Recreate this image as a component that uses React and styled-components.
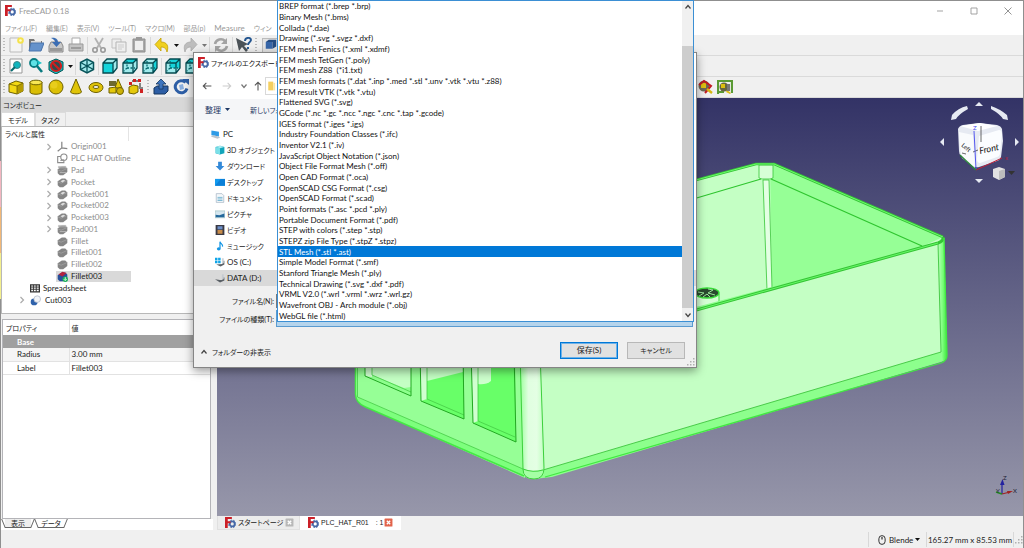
import React from "react";
import styled, { createGlobalStyle, css } from "styled-components";

const UI = `Lato, "Noto Sans CJK JP", sans-serif`;

const Global = createGlobalStyle`
  * { box-sizing: border-box; }
  body {
    margin: 0;
    overflow: hidden;
    font: 8px/12px ${UI};
    font-feature-settings: "palt";
    color: #222;
    background: #f0f0f0;
  }
  button, input, select {
    font: inherit;
    font-feature-settings: inherit;
    color: inherit;
    margin: 0;
    padding: 0;
    border: 0;
    background: none;
  }
  svg { display: block; flex: none; }
  ul { list-style: none; margin: 0; padding: 0; }
`;

/* ---------- main window ---------- */
const Window = styled.div`
  position: relative;
  display: flex;
  flex-direction: column;
  height: 100vh;
  border: 1px solid #8f8f8f;
  border-bottom: 0;
  background: #f0f0f0;
  &::before {
    content: "";
    position: absolute;
    left: -1px;
    top: 160px;
    width: 1px;
    height: 138px;
    background: linear-gradient(#f3b6c0 0 33%, #f2b877 33% 67%, #f4f08e 67%);
  }
`;
const TitleBar = styled.header`
  display: flex;
  align-items: center;
  height: 19px;
  padding-left: 4px;
  gap: 3px;
  background: #fff;
  color: #999;
`;
const Caption = styled.h1`
  flex: 1;
  margin: 0;
  font-size: 8px;
  font-weight: 400;
`;
const WinButton = styled.button`
  display: grid;
  place-items: center;
  width: 31px;
  height: 18px;
`;
const MenuBar = styled.nav`
  display: flex;
  align-items: center;
  height: 15px;
  padding-left: 4px;
  gap: 9px;
  background: #fff;
  color: #999;
  white-space: nowrap;
`;
const MenuItem = styled.button`
  && { font-size: ${(p) => (p.$latin ? "8px" : "7px")}; }
`;
const ToolRow = styled.div`
  display: flex;
  align-items: center;
  height: 21px;
  padding-left: 1px;
  border-bottom: 1px solid #dadada;
`;
const Grip = styled.span`
  width: 4px;
  height: 16px;
  margin-right: ${(p) => (p.$wide ? "1px" : "0")};
  background: radial-gradient(circle, #bbb 1px, transparent 1px) 0 0 / 4px 3px;
`;
const ToolButton = styled.button`
  display: grid;
  place-items: center;
  width: ${(p) => (p.$drop ? "8px" : "20px")};
  height: 20px;
`;
const Divider = styled.span`
  width: 1px;
  height: 17px;
  margin: 0 1px;
  background: #d8d8d8;
`;
const HiddenTools = styled.span`
  flex: 0 0 504px;
`;
const Workbench = styled.button`
  display: flex;
  align-items: center;
  width: 120px;
  height: 15px;
  margin-left: 3px;
  padding-left: 2px;
  border: 1px solid #bbb;
  background: #e3e3e3;
`;

const Main = styled.main`
  display: flex;
  flex: 1;
  min-height: 0;
`;
const Sidebar = styled.aside`
  display: flex;
  flex-direction: column;
  width: 216px;
  padding-right: 4px;
`;
const DockTitle = styled.h2`
  margin: 0;
  padding: 0 2px;
  height: 14px;
  font-size: 7px;
  line-height: 14px;
  font-weight: 400;
  background: #d8d8d8;
`;
const DockTabs = styled.div`
  display: flex;
  height: 14px;
  font-size: 7px;
`;
const DockTab = styled.button`
  width: ${(p) => (p.$on ? "34px" : "31px")};
  height: 14px;
  border: 1px solid #dcdcdc;
  border-bottom: 0;
  background: ${(p) => (p.$on ? "#fff" : "#f0f0f0")};
`;
const TreeBox = styled.section`
  flex: 0 0 188px;
  border: 1px solid #b8b8b8;
  background: #fff;
`;
const TreeHead = styled.div`
  width: 127px;
  height: 14px;
  padding-left: 3px;
  font-size: 7px;
  line-height: 14px;
  border-right: 1px solid #e4e4e4;
`;
const Tree = styled.ul`
  display: grid;
  grid-auto-rows: 1fr;
  height: 165px;
`;
const Node = styled.li`
  display: flex;
  align-items: center;
  padding-left: ${(p) => (p.$root ? "15px" : "42px")};
  gap: 2px;
  line-height: 11px;
  color: ${(p) => (p.$dim ? "#8c8c8c" : "#222")};
`;
const Expand = styled.span`
  display: grid;
  place-items: center;
  width: 10px;
`;
const NodeLabel = styled.span`
  display: flex;
  align-items: center;
  align-self: stretch;
  gap: ${(p) => (p.$root ? "4px" : "3px")};
  width: 75px;
  padding-left: 1px;
  white-space: nowrap;
  background: ${(p) => (p.$on ? "#d9d9d9" : "transparent")};
`;
const PropBox = styled.section`
  flex: 1;
  margin: 5px 2px 0 1px;
  border: 1px solid #b4b4b8;
  background: #fff;
`;
const PropTable = styled.table`
  width: 100%;
  border-collapse: collapse;
  table-layout: fixed;
  th, td {
    height: 13px;
    padding: 0 2px;
    text-align: left;
    font-weight: 400;
    line-height: 12px;
    border-bottom: 1px solid #e2e2e2;
  }
  th:first-child { width: 66px; padding-left: 14px; border-right: 1px solid #e2e2e2; }
  thead th { height: 15px; font-size: 7px; border-bottom: 0; }
  thead th:first-child { padding-left: 3px; }
  tbody tr:nth-child(2) { background: #f5f5f5; }
`;
const GroupRow = styled.tr`
  && { background: #a0a0a0; color: #fff; }
  && th { font-weight: 700; border: 0; }
`;
const PropTabs = styled.div`
  display: flex;
  height: 11px;
  margin-bottom: 1px;
  padding-left: 4px;
  gap: 7px;
  font-size: 7px;
  background: #fff;
`;
const SlantTab = styled.button`
  position: relative;
  width: 26px;
  height: 9px;
  line-height: 9px;
  border-bottom: 1px solid #666;
  background: ${(p) => (p.$on ? "#fff" : "#eee")};
  &::before, &::after {
    content: "";
    position: absolute;
    top: 0;
    height: 9px;
    width: 1px;
    background: #666;
  }
  &::before { left: -2px; transform: skewX(22deg); }
  &::after { right: -2px; transform: skewX(-22deg); }
`;

const ViewArea = styled.section`
  display: flex;
  flex-direction: column;
  flex: 1;
  min-width: 0;
`;
const Scene = styled.svg`
  flex: 1 1 0;
  width: 100%;
  min-height: 0;
`;
const DocTabs = styled.div`
  display: flex;
  height: 14px;
  margin-bottom: 1px;
  font-size: 7px;
`;
const DocTab = styled.button`
  display: flex;
  align-items: center;
  gap: 2px;
  width: ${(p) => (p.$on ? "101px" : "83px")};
  height: 14px;
  padding-left: 7px;
  border: 1px solid ${(p) => (p.$on ? "#fff" : "#e0e0e0")};
  border-top: 0;
  background: ${(p) => (p.$on ? "#fff" : "#ececec")};
  && { font-family: "Liberation Sans", "Noto Sans CJK JP", sans-serif; }
  white-space: pre;
`;
const DocName = styled.span`
  width: ${(p) => (p.$on ? "61px" : "45px")};
  display: flex;
  gap: 7px;
`;
const StatusBar = styled.footer`
  display: flex;
  align-items: center;
  justify-content: flex-end;
  height: 17px;
  gap: 1px;
`;
const StatusLine = styled.span`
  width: 1px;
  height: 15px;
  background: #d8d8d8;
`;
const NavStyle = styled.button`
  display: flex;
  align-items: center;
  gap: 2px;
  width: 55px;
  padding-left: 7px;
`;

/* ---------- export dialog ---------- */
const Dialog = styled.section`
  position: absolute;
  left: 192px;
  top: 51px;
  display: flex;
  flex-direction: column;
  width: 504px;
  border: 1px solid #858585;
  background: #f0f0f0;
  box-shadow: 0 3px 9px rgba(0, 0, 0, 0.4);
`;
const DialogTitle = styled.h2`
  display: flex;
  align-items: center;
  gap: 2px;
  height: 19px;
  margin: 0;
  padding-left: 4px;
  font-size: 7px;
  font-weight: 400;
  background: #fff;
  color: #111;
`;
const NavRow = styled.div`
  display: flex;
  align-items: center;
  height: 27px;
  padding-left: 3px;
  background: #fff;
`;
const NavButton = styled.button`
  display: grid;
  place-items: center;
  width: ${(p) => (p.$slim ? "14px" : "20px")};
  height: 18px;
`;
const Address = styled.div`
  display: flex;
  align-items: center;
  width: 220px;
  height: 18px;
  padding-left: 1px;
  border: 1px solid #d9d9d9;
`;
const CommandBar = styled.div`
  display: flex;
  align-items: center;
  gap: 20px;
  height: 21px;
  padding-left: 11px;
  background: #f5f6f8;
  color: #1f3864;
  button { display: flex; align-items: center; gap: 4px; }
`;
const CompactButton = styled.button`
  && { font-size: 7px; }
`;
const Places = styled.ul`
  padding-top: 6px;
  background: #fff;
`;
const Place = styled.li`
  display: flex;
  align-items: center;
  gap: 2px;
  height: 16px;
  padding-left: ${(p) => (p.$top ? "16px" : "21px")};
  font-size: ${(p) => (p.$latin ? "8px" : "7px")};
  background: ${(p) => (p.$on ? "#d9d9d9" : "transparent")};
`;
const Fields = styled.div`
  display: grid;
  grid-template-columns: 80px 417px;
  column-gap: 2px;
  row-gap: 2px;
  padding-top: 8px;
  align-items: center;
  label { text-align: right; white-space: nowrap; font-size: 7px; }
  input, select { height: 14px; border: 1px solid #7a7a7a; background: #fff; }
  select { border-color: #5a9bd0; background: #b5d4ec; appearance: none; height: 17px; color: transparent; }
`;
const Actions = styled.div`
  display: flex;
  align-items: center;
  gap: 9px;
  height: 40px;
  padding: 6px 11px 0 6px;
`;
const FolderToggle = styled.button`
  display: flex;
  align-items: center;
  gap: 4px;
  margin-right: auto;
  padding-top: 4px;
  && { font-size: 7px; }
`;
const PushButton = styled.button`
  width: 58px;
  height: 17px;
  background: #e1e1e1;
  border: 1px solid #b8b8b8;
  && { font-size: ${(p) => (p.$primary ? "8px" : "7px")}; }
  ${(p) =>
    p.$primary &&
    css`
      border-color: #0078d7;
      box-shadow: inset 0 0 0 1px #6fb2e8;
    `}
`;
const Corner = styled.span`
  position: absolute;
  right: 1px;
  bottom: 1px;
`;

/* ---------- file type list ---------- */
const Popup = styled.div`
  position: absolute;
  left: 276px;
  top: -1px;
  display: flex;
  width: 417px;
  height: 322px;
  border: 1px solid #3b8fd4;
  background: #fff;
`;
const Types = styled.ul`
  display: grid;
  grid-auto-rows: 1fr;
  flex: 1;
`;
const Type = styled.li`
  display: flex;
  align-items: center;
  padding-left: 1px;
  white-space: pre;
  line-height: 10px;
  background: ${(p) => (p.$on ? "#0078d7" : "#fff")};
  color: ${(p) => (p.$on ? "#fff" : "#111")};
`;
const Scroll = styled.div`
  display: flex;
  flex-direction: column;
  align-items: center;
  justify-content: space-between;
  width: 11px;
  padding: 2px 0;
  background: #f0f0f0;
`;
const Thumb = styled.span`
  flex: 1;
  width: 11px;
  margin: 35px 0 3px;
  background: #cdcdcd;
`;

/* ---------- icons ---------- */
const S = ({ s = 16, h, children, ...r }) => (
  <svg width={s} height={h || s} viewBox={`0 0 16 16`} fill="none" aria-hidden="true" {...r}>
    {children}
  </svg>
);
const Logo = ({ s = 11 }) => (
  <S s={s}>
    <circle cx="10.500" cy="10" r="3.600" fill="none" stroke="#4568a8" strokeWidth="2.600" />
    <circle cx="10.500" cy="10" r="5.400" fill="none" stroke="#4568a8" strokeWidth="1.400" strokeDasharray="2.400 2" />
    <path d="M0 0h10v3H4v3h4v3H4v7H0z" fill="#cb1f27" />
  </S>
);
const Chev = ({ d = "down", c = "#444", s = 8 }) => (
  <S s={s}>
    <path
      d={{ down: "M3 5l5 6 5-6", up: "M3 11l5-6 5 6", right: "M5 2l6 6-6 6" }[d]}
      stroke={c}
      strokeWidth="2.400"
    />
  </S>
);
const Caret = ({ c = "#111" }) => (
  <svg width="5" height="3" viewBox="0 0 5 3" aria-hidden="true">
    <path d="M0 0h5L2.500 3z" fill={c} />
  </svg>
);
const Arrow = ({ r = 0, c = "#555" }) => (
  <S s={10}>
    <path d="M15 8H2M7 3L2 8l5 5" stroke={c} strokeWidth="1.700" transform={`rotate(${r} 8 8)`} />
  </S>
);
const ViewCube = ({ face }) => (
  <S>
    <path d="M1 5l4-4h10v9l-4 5H1z" fill="#9fe9eb" />
    {face === "front" && <path d="M1 5h10v10H1z" fill="#16d4da" />}
    {face === "top" && <path d="M1 5l4-4h10l-4 4z" fill="#16d4da" />}
    {face === "right" && <path d="M11 5l4-4v9l-4 5z" fill="#16d4da" />}
    {face === "rear" && <path d="M5 1h10v9H5z" fill="#16d4da" />}
    <path d="M1 5l4-4h10v9l-4 5H1zM1 5h10v10M11 5l4-4" stroke="#04494f" strokeWidth="1.300" />
    {face !== "front" && <path d="M5 3v7h8M5 10l-3 3" stroke="#04696f" strokeWidth="1.300" strokeDasharray="2 1.500" />}
  </S>
);
const T = {
  new: <S><path d="M2 1h9l3 3v11H2z" fill="#f4f4f4" stroke="#bbb" /><circle cx="12.500" cy="3.500" r="3.300" fill="#f4e24d" /><circle cx="12.500" cy="3.500" r="1.300" fill="#fffbd0" /></S>,
  open: <S><path d="M1 2h5l1 2h7v9H1z" fill="#777" /><path d="M3 4h10v5H3z" fill="#ddd" /><path d="M1 14l2-8h13l-3 8z" fill="#6592cb" stroke="#4a74ac" /></S>,
  save: <S><path d="M1 9l2-4h10l2 4v6H1z" fill="#c9c9c9" stroke="#888" /><path d="M2 11h12v3H2z" fill="#999" /><path d="M3 1c5-1 7 2 7 4h3L8.500 10 4 5h3c0-2-2-3-4-4z" fill="#3b6db3" /></S>,
  print: <S><path d="M4 1h8v7H4z" fill="#fff" stroke="#aaa" /><path d="M1 7h14v7H1z" fill="#c4c4c4" stroke="#999" /><path d="M3 11h10" stroke="#777" /></S>,
  cut: <S><path d="M4 1l6 10M12 1L6 11" stroke="#b2b2b2" strokeWidth="1.800" /><circle cx="4" cy="13" r="2.200" stroke="#999" strokeWidth="1.600" /><circle cx="12" cy="13" r="2.200" stroke="#999" strokeWidth="1.600" /></S>,
  copy: <S><path d="M1 2h9v9H1z" fill="#eee" stroke="#c2c2c2" /><path d="M5 5h10v10H5z" fill="#eee" stroke="#b5b5b5" /><path d="M7 8h6M7 10h6M7 12h4" stroke="#ccc" /></S>,
  paste: <S><path d="M2 2h12v13H2z" fill="#aaa" stroke="#8c8c8c" /><path d="M4 4h8v9H4z" fill="#efefef" /><path d="M5 0h6v3H5z" fill="#999" /></S>,
  undo: <S><path d="M7 1v4c6 0 8 4 6 10-1-4-3-5-6-5v4L1 7.500z" fill="#f0d020" stroke="#c2a000" strokeWidth=".8" /></S>,
  redo: <S><path d="M9 1v4c-6 0-8 4-6 10 1-4 3-5 6-5v4l6-6.500z" fill="#bdbdbd" stroke="#aaa" strokeWidth=".8" /></S>,
  refresh: <S><path d="M2 7c1-5 7-6 10-3M14 9c-1 5-7 6-10 3" stroke="#a3a3a3" strokeWidth="2.600" /><path d="M14 1v6H8zM2 15V9h6z" fill="#a3a3a3" /></S>,
  what: <S><path d="M0 1l3 13 3-4 4 5 2-2-4-4 4-2z" fill="#4c5358" /><path d="M9 4c0-4 6-4 6-1 0 2-3 2-3 5M12 10v2" stroke="#24558f" strokeWidth="1.900" /></S>,
  part: <S s={12}><path d="M1 4h9v9H1z" fill="#3665a8" /><path d="M1 4l4-3h10v9l-5 3V4z" fill="#244a80" /></S>,
  fitAll: <S><path d="M2 1h12v14H2z" fill="#fff" stroke="#999" /><circle cx="9" cy="7" r="3.500" fill="#10b5bd" stroke="#3d8488" /><path d="M7 9l-4 4" stroke="#066a70" strokeWidth="2.200" /></S>,
  fitSel: <S><circle cx="6" cy="5" r="4" fill="#5ee2e6" stroke="#087a80" strokeWidth="1.800" /><path d="M9 8l5 6" stroke="#087a80" strokeWidth="2.600" /><path d="M9 2l5 3-4 2" fill="#18c2c8" /></S>,
  draw: <S><path d="M1 4l7-3 7 3v8l-7 4-7-4z" fill="#14bcc2" stroke="#055" /><circle cx="8" cy="8" r="5" stroke="#cc1f1f" strokeWidth="2.200" fill="#2c4c50" /><path d="M4.500 4.500l7 7" stroke="#cc1f1f" strokeWidth="2.200" /></S>,
  iso: <S><path d="M1.500 4.500L8 1l6.500 3.500v7L8 15l-6.500-3.500z" fill="#a3eaec" stroke="#07545a" strokeWidth="1.500" /><path d="M8 1v14M1.500 4.500L8 8l6.500-3.500M1.500 11.500L8 8l6.500 3.500" stroke="#07545a" strokeWidth="1.300" /></S>,
  front: <ViewCube face="front" />,
  top: <ViewCube face="top" />,
  right: <ViewCube face="right" />,
  rear: <ViewCube face="rear" />,
  box: <S><path d="M1 5l7-3 7 2v8l-6 3-8-2z" fill="#f3d714" stroke="#6e6100" /><path d="M9 7l6-3v8l-6 3z" fill="#b59b00" /><path d="M1 5l8 2 6-3M9 7v8" stroke="#6e6100" strokeWidth=".8" /></S>,
  cyl: <S><path d="M2 3v10c0 3 12 3 12 0V3z" fill="#d9bd05" stroke="#6e6100" /><ellipse cx="8" cy="3.500" rx="6" ry="2.300" fill="#f8e654" stroke="#6e6100" /></S>,
  sphere: <S><circle cx="8" cy="8" r="7" fill="#dcc006" stroke="#6e6100" /><circle cx="6" cy="6" r="3.500" fill="#e8cd1c" /></S>,
  cone: <S><path d="M8 0l5.500 13c-1 2.500-10 2.500-11 0z" fill="#e0c408" stroke="#6e6100" /></S>,
  torus: <S><ellipse cx="8" cy="8.500" rx="7" ry="5" fill="#dfc207" stroke="#6e6100" /><ellipse cx="8" cy="8" rx="3" ry="1.500" fill="#f0f0f0" stroke="#6e6100" /></S>,
  prims: <S><path d="M1 2h7v5H1z" fill="#6d6a30" /><path d="M10 0l4 9H7z" fill="#e4c90c" stroke="#6e6100" /><path d="M1 9l7-1v6H1z" fill="#e4c90c" stroke="#6e6100" /><circle cx="12" cy="12" r="3.500" fill="#cdb207" stroke="#6e6100" /></S>,
  builder: <S><path d="M1 8l4-2 5 1v6l-4 2-5-1z" fill="#e4c90c" stroke="#6e6100" /><path d="M4 2h7M12 4v6M14 8v5" stroke="#555" strokeWidth="1.400" /><path d="M5 0h3v3H5zM10 0h3v3h-3zM1 3h3v3H1zM12 10h3v4h-3z" fill="#cf2222" /></S>,
  extrude: <S><path d="M1 9l3-2h11v5l-3 3H1z" fill="#2d5ea5" stroke="#17375f" /><path d="M8 0l5 5h-3v5H6V5H3z" fill="#3d74bd" stroke="#17375f" strokeWidth=".8" /></S>,
  revolve: <S><path d="M12.500 3.500a6 6 0 10 1.500 6" stroke="#2d5ea5" strokeWidth="3" /><path d="M6 6l4-1 1 5-4 1z" fill="#89aede" /><path d="M9 0h7v6z" fill="#2d5ea5" /></S>,
  measA: <S><circle cx="7" cy="7" r="5.500" fill="#6c6a55" /><path d="M4 4h5v5H4z" fill="#dcbf10" /><path d="M2 6l5-4 7 5-6 7" stroke="#c11c22" strokeWidth="2" /><path d="M10 10l5 4" stroke="#d6b710" strokeWidth="2.400" /></S>,
  measB: <S><path d="M1 15V2h14v12" stroke="#5a9a34" strokeWidth="2.200" /><path d="M2 13h5" stroke="#5a9a34" strokeWidth="2" /><circle cx="7" cy="8" r="4.500" fill="#67663f" /><path d="M4 5h4v4H4zM10 11l4 3-1 1-4-2z" fill="#dcbf10" /><path d="M10 5h3v7h-3z" fill="#777" /></S>,
};
const Solid = ({ c = "#858585", pocket, pad }) => (
  <S s={11}>
    <path d="M1 6l6-4h5l3 3v5l-6 5H4l-3-3z" fill={c} />
    <path d="M1 7l5 2 9-4" stroke="#a8a8a8" strokeWidth="1" />
    {pocket && <path d="M5 6l4-2 3 1-4 3z" fill="#ddd" />}
    {pad && <path d="M2 2h11v2H2zM4 11h9" fill="#6e6e6e" stroke="#ccc" />}
  </S>
);
const N = {
  origin: <S s={11}><path d="M7 1v9l8 1M7 10l-6 5" stroke="#858585" strokeWidth="1.800" /></S>,
  sketch: <S s={11}><path d="M1 5h9v9H1z" stroke="#8c8c8c" strokeWidth="1.600" /><circle cx="10" cy="6" r="4.500" stroke="#8c8c8c" strokeWidth="1.600" fill="#fff" /><path d="M5 11l5-1" stroke="#8c8c8c" strokeWidth="1.500" /></S>,
  pad: <Solid pad />,
  pocket: <Solid pocket />,
  fillet: <Solid />,
  active: <S s={11}><path d="M1 6l6-4h5l3 3v5l-6 5H4l-3-3z" fill="#27509a" /><path d="M2 5l6-4 6 2-6 5z" fill="#b3223e" /><circle cx="12" cy="12" r="4" fill="#18b05a" /><path d="M12 9v4M10 12l2 2 2-2" stroke="#fff" strokeWidth="1.200" /></S>,
  sheet: <S s={10}><path d="M1 3h14v11H1z" fill="#fff" stroke="#333" strokeWidth="2" /><path d="M1 6.500h14M1 10h14M5.500 3v11M10 3v11" stroke="#333" strokeWidth="1.500" /></S>,
  cut: <S s={11}><circle cx="6" cy="10" r="5" fill="#2f62ab" /><circle cx="10.500" cy="6" r="4.800" fill="#f2f4f8" stroke="#a9b3c4" /></S>,
};
const P = {
  pc: <S s={11}><path d="M2 2l11 2v7L2 9z" fill="#2e9be6" /><path d="M1 11l10 3 4-2-9-3z" fill="#bcc4cc" /></S>,
  cube: <S s={10}><path d="M1 3l7-2 7 2v10l-7 2-7-2z" fill="#12a5ba" /><path d="M1 3l7 2 7-2-7-2z" fill="#a7ecf2" /><path d="M1 3l7 2v10l-7-2z" fill="#7be0e8" /></S>,
  down: <S s={10}><path d="M5 1h6v7h4l-7 7-7-7h4z" fill="#3389d8" /></S>,
  desk: <S s={10}><path d="M0 3h16v11H0z" fill="#129aef" /><path d="M0 14L9 3h7v11z" fill="#0b80d8" /></S>,
  doc: <S s={10}><path d="M2 1h9l3 3v11H2z" fill="#f4f8fa" stroke="#9ab" /><path d="M4 7h8M4 9.500h8M4 12h8" stroke="#58a6c9" strokeWidth="1.200" /></S>,
  pic: <S s={10}><path d="M0 3h16v11H0z" fill="#d5e6ef" stroke="#9bb" /><path d="M1 9l6 1 8-3v6H1z" fill="#24689b" /></S>,
  video: <S s={10}><path d="M1 0h14v16H1z" fill="#3a3a44" /><path d="M4 2h8v5H4z" fill="#6c8fc8" /><path d="M4 8h8v6H4z" fill="#c88c4a" /></S>,
  music: <S s={10}><path d="M8 1v11M8 1c1 4 5 4 4 8" stroke="#1596e4" strokeWidth="2" /><ellipse cx="6" cy="12.500" rx="3" ry="2.500" fill="#1596e4" /></S>,
  os: <S s={10}><path d="M0 1h4v4H0zM5 1h4v4H5zM0 6h4v4H0zM5 6h4v4H5z" fill="#10a5e8" /><path d="M2 12l7 3 6-3V6h-3v5z" fill="#5a6066" /><path d="M11 2h3v8h-3z" fill="#cfd4d8" /></S>,
  disk: <S s={10}><path d="M0 10l8 5 7-3V7h-3v4H8z" fill="#5a6066" /><path d="M11 2h3v8h-3z" fill="#c6cbd0" /></S>,
};
const CloseMark = ({ c }) => (
  <S s={9}>
    <rect x="1" y="1" width="14" height="14" rx="1" fill={c} />
    <path d="M5 5l6 6M11 5l-6 6" stroke="#fff" strokeWidth="2.400" />
  </S>
);
const SizeGrip = () => (
  <svg width="8" height="8" viewBox="0 0 8 8" aria-hidden="true">
    <path d="M6 0h1.500v1.500H6zM3 3h1.500v1.500H3zM6 3h1.500v1.500H6zM0 6h1.500v1.500H0zM3 6h1.500v1.500H3zM6 6h1.500v1.500H6z" fill="#b0b0b0" />
  </svg>
);

/* ---------- data ---------- */
const MENUS = ["ファイル(F)", "編集(E)", "表示(V)", "ツール(T)", "マクロ(M)", "部品(p)", "Measure", "ウィン"];
const ROW1 = ["new", "open", "save", "print", "|", "cut", "copy", "paste", "|", "undo", "v", "redo", "v", "|", "refresh", "|", "what"];
const ROW2 = ["fitAll", "fitSel", "draw", "v", "|", "iso", "|", "front", "top", "right", "|", "rear", "top"];
const ROW3 = ["box", "cyl", "sphere", "cone", "torus", "prims", "builder", "#", "extrude", "revolve", "_", "measA", "measB"];
const NODES = [
  ["origin", "Origin001", 1], ["sketch", "PLC HAT Outline", 0], ["pad", "Pad", 1], ["pocket", "Pocket", 1],
  ["pocket", "Pocket001", 1], ["pocket", "Pocket002", 1], ["pocket", "Pocket003", 1], ["pad", "Pad001", 1],
  ["fillet", "Fillet", 0], ["fillet", "Fillet001", 0], ["fillet", "Fillet002", 0],
];
const PLACES = [
  ["pc", "PC"], ["cube", "3D オブジェクト"], ["down", "ダウンロード"], ["desk", "デスクトップ"], ["doc", "ドキュメント"],
  ["pic", "ピクチャ"], ["video", "ビデオ"], ["music", "ミュージック"], ["os", "OS (C:)"], ["disk", "DATA (D:)"],
];
const LATIN_PLACES = ["pc", "os", "disk"];
const TYPES = [
  "BREP format (*.brep *.brp)", "Binary Mesh (*.bms)", "Collada (*.dae)", "Drawing (*.svg *.svgz *.dxf)",
  "FEM mesh Fenics (*.xml *.xdmf)", "FEM mesh TetGen (*.poly)", "FEM mesh Z88  (*i1.txt)",
  "FEM mesh formats (*.dat *.inp *.med *.stl *.unv *.vtk *.vtu *.z88)", "FEM result VTK (*.vtk *.vtu)",
  "Flattened SVG (*.svg)", "GCode (*.nc *.gc *.ncc *.ngc *.cnc *.tap *.gcode)", "IGES format (*.iges *.igs)",
  "Industry Foundation Classes (*.ifc)", "Inventor V2.1 (*.iv)", "JavaScript Object Notation (*.json)",
  "Object File Format Mesh (*.off)", "Open CAD Format (*.oca)", "OpenSCAD CSG Format (*.csg)",
  "OpenSCAD Format (*.scad)", "Point formats (*.asc *.pcd *.ply)", "Portable Document Format (*.pdf)",
  "STEP with colors (*.step *.stp)", "STEPZ zip File Type (*.stpZ *.stpz)", "STL Mesh (*.stl *.ast)",
  "Simple Model Format (*.smf)", "Stanford Triangle Mesh (*.ply)", "Technical Drawing (*.svg *.dxf *.pdf)",
  "VRML V2.0 (*.wrl *.vrml *.wrz *.wrl.gz)", "Wavefront OBJ - Arch module (*.obj)", "WebGL file (*.html)",
];

const Tools = ({ items }) =>
  items.map((k, i) => {
    if (k === "|") return <Divider key={i} />;
    if (k === "#") return <Grip key={i} $wide />;
    if (k === "_") return <HiddenTools key={i} />;
    if (k === "v") return <ToolButton key={i} $drop aria-label="menu"><Caret c={i > 10 ? "#777" : "#111"} /></ToolButton>;
    return <ToolButton key={i} aria-label={k}>{T[k]}</ToolButton>;
  });

const Model = () => (
  <Scene viewBox="217 98 806 418" preserveAspectRatio="xMidYMid slice" role="img" aria-label="3D view">
    <defs>
      <linearGradient id="sky" x1="0" y1="0" x2="0" y2="1">
        <stop offset="0" stopColor="#333366" />
        <stop offset="1" stopColor="#9797aa" />
      </linearGradient>
      <linearGradient id="post" x1="0" x2="1" y1="0" y2="0">
        <stop offset="0" stopColor="#9cff9c" />
        <stop offset=".35" stopColor="#e0ffe0" />
        <stop offset=".7" stopColor="#e4ffe4" />
        <stop offset="1" stopColor="#c0ffc0" />
      </linearGradient>
      <linearGradient id="edge" x1="0" x2="1" y1="0" y2="0">
        <stop offset="0" stopColor="#bcffbc" />
        <stop offset=".5" stopColor="#7dff7d" />
        <stop offset="1" stopColor="#3fe63f" />
      </linearGradient>
    </defs>
    <rect x="217" y="98" width="806" height="418" fill="url(#sky)" />
    {/* inner walls */}
    <path d="M520 226L758 164h15l170 73-5 6-418 116z" fill="#c4ffc4" />
    <path d="M770 164l173 73-22 10-149 43z" fill="#96ff96" />
    <path d="M520 250L700 197l61-18M771 179l151 67" stroke="#2fc52f" strokeWidth="1.200" fill="none" />
    <path d="M763 180h6l3 109-5 1z" fill="#e3ffe3" stroke="#35c535" strokeWidth=".8" />
    <path d="M759 165h14v13l-3 1h-8l-3-1z" fill="#d6ffd6" stroke="#35c535" strokeWidth=".8" />
    <path d="M520 227L756 164h18l169 73" stroke="#35c535" strokeWidth="2.600" fill="none" strokeLinejoin="round" />
    <path d="M520 227L756 164h18l169 73" stroke="#6dfc6d" strokeWidth="1" fill="none" />
    {/* screw boss */}
    <path d="M695 294v12h24v-12z" fill="#d5ffd5" />
    <path d="M719 294v12" stroke="#3ddd3d" />
    <ellipse cx="707" cy="293" rx="12" ry="5" fill="#2a4a2f" stroke="#39dd39" strokeWidth="1.400" />
    <path d="M698 292l6 1-5 3M708 289l5 1-5 3 7 2M703 297l4-3 3 3" stroke="#9be89b" strokeWidth="1" fill="none" />
    {/* right and bottom rounded edges */}
    <path d="M938 243l4-6 2 2 3 116q0 5-6 7L552 477l-18 2V350z" fill="#8dff8d" />
    <path d="M938 243l6-5 3 117q0 4-4 7l-2-10z" fill="url(#edge)" />
    {/* front wall */}
    <path d="M520 359l418-116 3 109-398 118-23-1z" fill="#c4ffc4" />
    <path d="M938 243l3 109-398 118" stroke="#3fc53f" strokeWidth=".9" fill="none" />
    <path d="M520 359l418-116q6-2 5-6" stroke="#35c535" strokeWidth="3" fill="none" />
    <path d="M520 359l418-116" stroke="#68f868" strokeWidth="1" fill="none" />
    <path d="M944 238l3 117q0 6-6 8L545 477" stroke="#42e842" strokeWidth="1.300" fill="none" />
    {/* left wall with windows */}
    <path d="M355 350h170v128L366 407q-9-4-10-10z" fill="#96ff96" />
    <path d="M357 397l166 72v7L366 407q-8-4-9-10z" fill="#7dff7d" />
    <path d="M355.500 350v44q0 9 10 13L524 476" stroke="#45e845" strokeWidth="1.500" fill="none" />
    <path d="M357.500 350v47L523 469" stroke="#45cc45" strokeWidth=".8" fill="none" />
    <path d="M365 350h46v46l-46-20z" fill="#8dff8d" />
    <path d="M365 350h7v27l-7-1z" fill="#d0ffd0" />
    <path d="M372 350h39v37l-7 1-32-13z" fill="#c4ffc4" />
    <path d="M420 350h44v69l-43-18z" fill="#68ff68" />
    <path d="M420 350h7v49l-6 2z" fill="#d0ffd0" />
    <path d="M427 350h36v22l-36 9z" fill="#c4ffc4" />
    <path d="M471 350h44l1 92-43-19z" fill="#68ff68" />
    <path d="M471 350h7v71l-5 2z" fill="#d0ffd0" />
    <path d="M478 350h13v31q-5 4-13 3z" fill="#cdffcd" />
    <path d="M372 350v25l39 17M427 350v49l37 16M478 350v71l37 16" stroke="#45cc45" strokeWidth=".8" fill="none" />
    <path d="M365 350v26l46 20v-46M420 350l1 51 43 18-1-69M471 350l2 73 43 19-2-92" stroke="#22a822" strokeWidth="1" fill="none" />
    {/* front post */}
    <path d="M520 350h21l3 117q0 12-10 12-11 0-11-11z" fill="url(#post)" />
    <path d="M523 469q10 4 21 0v5q-4 6-11 5-8 0-10-6z" fill="#a5ffa5" />
    <path d="M520 350l3 119q0 10 11 10 10 0 10-11l-4-118M523 469q10 4 20 1" stroke="#3cd03c" strokeWidth="1" fill="none" />
    {/* navigation cube */}
    <g fill="#e6eaf2">
      <path d="M975 106l4-4 4 4zM975 179h8l-4 4zM944 138v8l-4-4zM1015 138v8l4-4z" />
      <path d="M967 106q-9 2-15 9l-1 5 5-1q3-5 12-10zM991 106q9 3 16 9l1 5-5-1q-3-5-12-10z" />
      <path d="M958 129q1-3 5-4l16-2 18 2q4 1 5 4l1 12-2 16q-1 3-4 4l-18 6q-3 1-5-1l-13-10q-2-2-2-5z" />
    </g>
    <path d="M959 132l14 3 2 33-13-10q-3-12-3-26z" fill="#f9fbfd" />
    <path d="M979 136l20-6q3 0 3 5l-2 18q0 3-3 4l-17 6q-3 0-3-4z" fill="#fbfdff" />
    <path d="M960 126l20-3 17 3-19 5z" fill="#fff" />
    <path d="M981 126v16M973 152l5-2M962 153l4 1" stroke="#444" strokeWidth=".8" />
    <g fontFamily={UI} fill="#111">
      <text x="980" y="154" fontSize="9" fontStyle="italic" transform="rotate(-12 980 154)">Front</text>
      <text x="961" y="146" fontSize="6" transform="rotate(40 961 146)">Left</text>
      <text x="973" y="130" fontSize="6" fill="#4444ee">Z</text>
      <text x="1005" y="160" fontSize="6" fill="#b02040">x</text>
    </g>
    <path d="M974 131l2 38" stroke="#5558f0" strokeWidth="1" />
    <path d="M976 170l26-12" stroke="#c02038" strokeWidth="1" />
    <path d="M960 155l16 15" stroke="#2a8a3a" strokeWidth="1.200" />
    <path d="M993 169l6-2 6 2v8l-6 3-6-3z" fill="#e2e2e2" />
    <path d="M999 171l6-2v8l-6 3z" fill="#bdbdbd" />
    <path d="M1008 171h7l-3.500 4z" fill="#333" />
    {/* axis cross */}
    <path d="M1002 494v-10" stroke="#2222a0" strokeWidth="1.200" />
    <path d="M1000 485l2.500-6 2 6z" fill="#2222a0" />
    <path d="M1002 494l8-2" stroke="#a02222" strokeWidth="1.200" />
    <path d="M1007 491l6 0-5 3z" fill="#a02222" />
    <path d="M1002 494l-6-2" stroke="#228822" strokeWidth="1.500" />
    <g fontFamily={UI} fontSize="6" fill="#223">
      <text x="1003" y="480">Z</text>
      <text x="1013" y="493">X</text>
      <text x="996" y="493">Y</text>
    </g>
  </Scene>
);

export default function App() {
  return (
    <>
      <Global />
      <Window>
        <TitleBar>
          <Logo />
          <Caption>FreeCAD 0.18</Caption>
          <WinButton aria-label="最小化"><S s={8}><path d="M2 8h12" stroke="#999" strokeWidth="1.800" /></S></WinButton>
          <WinButton aria-label="最大化"><S s={8}><path d="M2 2h12v12H2z" stroke="#999" strokeWidth="1.800" /></S></WinButton>
          <WinButton aria-label="閉じる"><S s={8}><path d="M1 1l14 14M15 1L1 15" stroke="#888" strokeWidth="1.800" /></S></WinButton>
        </TitleBar>
        <MenuBar>{MENUS.map((m) => <MenuItem key={m} $latin={m === "Measure"}>{m}</MenuItem>)}</MenuBar>
        <ToolRow>
          <Grip />
          <Tools items={ROW1} />
          <Grip $wide />
          <Workbench aria-label="Workbench">{T.part}</Workbench>
        </ToolRow>
        <ToolRow><Grip /><Tools items={ROW2} /></ToolRow>
        <ToolRow><Grip /><Tools items={ROW3} /></ToolRow>
        <Main>
          <Sidebar>
            <DockTitle>コンボビュー</DockTitle>
            <DockTabs><DockTab $on>モデル</DockTab><DockTab>タスク</DockTab></DockTabs>
            <TreeBox>
              <TreeHead>ラベルと属性</TreeHead>
              <Tree>
                {NODES.map(([ic, label, kids]) => (
                  <Node key={label} $dim>
                    <Expand>{kids ? <Chev d="right" c="#aaa" /> : null}</Expand>
                    <NodeLabel>{N[ic]}{label}</NodeLabel>
                  </Node>
                ))}
                <Node><Expand /><NodeLabel $on>{N.active}Fillet003</NodeLabel></Node>
                <Node $root><Expand /><NodeLabel>{N.sheet}Spreadsheet</NodeLabel></Node>
                <Node $root><Expand><Chev d="right" c="#aaa" /></Expand><NodeLabel $root>{N.cut}Cut003</NodeLabel></Node>
              </Tree>
            </TreeBox>
            <PropBox>
              <PropTable>
                <thead><tr><th>プロパティ</th><th>値</th></tr></thead>
                <tbody>
                  <GroupRow><th colSpan="2">Base</th></GroupRow>
                  <tr><th>Radius</th><td>3.00 mm</td></tr>
                  <tr><th>Label</th><td>Fillet003</td></tr>
                </tbody>
              </PropTable>
            </PropBox>
            <PropTabs><SlantTab>表示</SlantTab><SlantTab $on>データ</SlantTab></PropTabs>
          </Sidebar>
          <ViewArea>
            <Model />
            <DocTabs>
              <DocTab><Logo /><DocName>スタートページ</DocName><CloseMark c="#b8b8b8" /></DocTab>
              <DocTab $on><Logo /><DocName $on><span>PLC_HAT_R01</span><span>: 1</span></DocName><CloseMark c="#e2644c" /></DocTab>
            </DocTabs>
          </ViewArea>
        </Main>
        <StatusBar>
          <StatusLine />
          <NavStyle>
            <S s={10}><rect x="3" y="1" width="10" height="14" rx="5" stroke="#333" strokeWidth="1.600" /><path d="M8 3v4" stroke="#333" strokeWidth="2" /></S>
            <span>Blende</span><Caret />
          </NavStyle>
          <StatusLine />
          <span>165.27 mm x 85.53 mm</span>
          <StatusLine />
          <SizeGrip />
        </StatusBar>

        <Dialog role="dialog" aria-label="ファイルのエクスポート">
          <DialogTitle><Logo />ファイルのエクスポート</DialogTitle>
          <NavRow>
            <NavButton aria-label="戻る"><Arrow /></NavButton>
            <NavButton aria-label="進む"><Arrow r={180} c="#ccc" /></NavButton>
            <NavButton $slim aria-label="履歴"><Chev c="#777" /></NavButton>
            <NavButton $slim aria-label="上へ"><Arrow r={90} /></NavButton>
            <Address><S s={10}><path d="M2 1h8v14H2z" fill="#f4cf60" /><path d="M10 3h3v12h-3z" fill="#fbe6a0" /></S></Address>
          </NavRow>
          <CommandBar>
            <button>整理 <Caret c="#1f3864" /></button>
            <CompactButton>新しいフォ</CompactButton>
          </CommandBar>
          <Places>
            {PLACES.map(([ic, label], i) => (
              <Place key={label} $top={i === 0} $on={ic === "disk"} $latin={LATIN_PLACES.includes(ic)}>{P[ic]}{label}</Place>
            ))}
          </Places>
          <Fields>
            <label htmlFor="fname">ファイル名(N):</label>
            <input id="fname" />
            <label htmlFor="ftype">ファイルの種類(T):</label>
            <select id="ftype" />
          </Fields>
          <Actions>
            <FolderToggle><Chev d="up" />フォルダーの非表示</FolderToggle>
            <PushButton $primary>保存(S)</PushButton>
            <PushButton>キャンセル</PushButton>
          </Actions>
          <Corner><SizeGrip /></Corner>
        </Dialog>

        <Popup>
          <Types role="listbox" aria-label="ファイルの種類">
            {TYPES.map((t) => {
              const on = t.startsWith("STL");
              return <Type key={t} role="option" aria-selected={on} $on={on}>{t}</Type>;
            })}
          </Types>
          <Scroll><Chev d="up" /><Thumb /><Chev /></Scroll>
        </Popup>
      </Window>
    </>
  );
}
